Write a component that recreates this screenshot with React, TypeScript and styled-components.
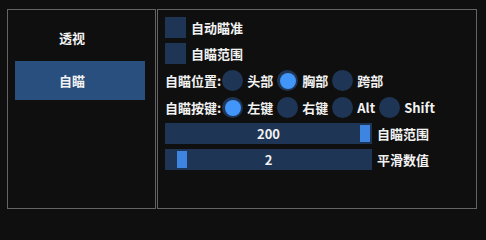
import styled, { createGlobalStyle } from "styled-components";

const GlobalStyle = createGlobalStyle`
  html, body {
    margin: 0;
    padding: 0;
    background: #0f0f0f;
  }
  body {
    font-family: "Noto Sans CJK SC", "Liberation Sans", sans-serif;
    font-size: 13px;
    font-weight: 700;
    color: #f2f2f2;
  }
`;

const FRAME = "#1f3555";
const ACCENT = "#4296fa";

const Screen = styled.div`
  width: 486px;
  height: 214px;
  padding: 9px 0 0 7px;
  box-sizing: border-box;
`;

const Frame = styled.div`
  display: flex;
  gap: 1px;
  width: 470px;
  height: 200px;
`;

const Child = styled.div`
  border: 1px solid #646464;
  box-sizing: border-box;
  height: 100%;
`;

const Sidebar = styled(Child)`
  width: 149px;
  padding: 8px 7px;
  display: flex;
  flex-direction: column;
  gap: 4px;
`;

const Content = styled(Child)`
  flex: 1;
  padding: 7px 7px;
  display: flex;
  flex-direction: column;
  gap: 5px;
`;

const TabButton = styled.div<{ $active?: boolean }>`
  width: 130px;
  height: 39px;
  display: flex;
  align-items: center;
  justify-content: center;
  padding-right: 16px;
  box-sizing: border-box;
  background: ${(p) => (p.$active ? "#284f7e" : "transparent")};
  line-height: 1;
`;

const Row = styled.div<{ $push?: number }>`
  display: flex;
  align-items: center;
  height: 21px;
  line-height: 1;
  white-space: nowrap;
  margin-top: ${(p) => p.$push ?? 0}px;
`;

const Box = styled.div`
  width: 21px;
  height: 21px;
  background: ${FRAME};
  margin-right: 5px;
  flex: none;
`;

const Label = styled.span`
  margin-right: 1px;
`;

const Radio = styled.span<{ $on?: boolean }>`
  width: 21px;
  height: 21px;
  border-radius: 50%;
  background: ${FRAME};
  display: flex;
  align-items: center;
  justify-content: center;
  margin-right: 4px;
  flex: none;
  &::after {
    content: "";
    width: 16px;
    height: 16px;
    border-radius: 50%;
    background: ${(p) => (p.$on ? ACCENT : "transparent")};
  }
`;

const Option = styled.span`
  margin-right: 4px;
`;

const SliderTrack = styled.div`
  position: relative;
  width: 207px;
  height: 21px;
  background: ${FRAME};
  display: flex;
  align-items: center;
  justify-content: center;
  margin-right: 5px;
  flex: none;
`;

const Grab = styled.div`
  position: absolute;
  top: 2px;
  width: 10px;
  height: 17px;
  background: #3d85e0;
`;

const Value = styled.span`
  position: relative;
`;

function Slider({ value, min, max }: { value: number; min: number; max: number }) {
  const frac = (value - min) / (max - min);
  const left = 2 + frac * (207 - 4 - 10);
  return (
    <SliderTrack>
      <Grab style={{ left }} />
      <Value>{value}</Value>
    </SliderTrack>
  );
}

function RadioRow({ label, options, selected, push }: { label: string; options: string[]; selected: number; push?: number }) {
  return (
    <Row $push={push}>
      <Label>{label}</Label>
      {options.map((o, i) => (
        <span key={o} style={{ display: "contents" }}>
          <Radio $on={i === selected} />
          <Option>{o}</Option>
        </span>
      ))}
    </Row>
  );
}

export default function App() {
  return (
    <Screen>
      <GlobalStyle />
      <Frame>
        <Sidebar>
          <TabButton>透视</TabButton>
          <TabButton $active>自瞄</TabButton>
        </Sidebar>
        <Content>
          <Row>
            <Box />
            自动瞄准
          </Row>
          <Row>
            <Box />
            自瞄范围
          </Row>
          <RadioRow label="自瞄位置:" options={["头部", "胸部", "跨部"]} selected={1} push={1} />
          <RadioRow label="自瞄按键:" options={["左键", "右键", "Alt", "Shift"]} selected={0} push={1} />
          <Row>
            <Slider value={200} min={0} max={200} />
            自瞄范围
          </Row>
          <Row>
            <Slider value={2} min={1} max={20} />
            平滑数值
          </Row>
        </Content>
      </Frame>
    </Screen>
  );
}
